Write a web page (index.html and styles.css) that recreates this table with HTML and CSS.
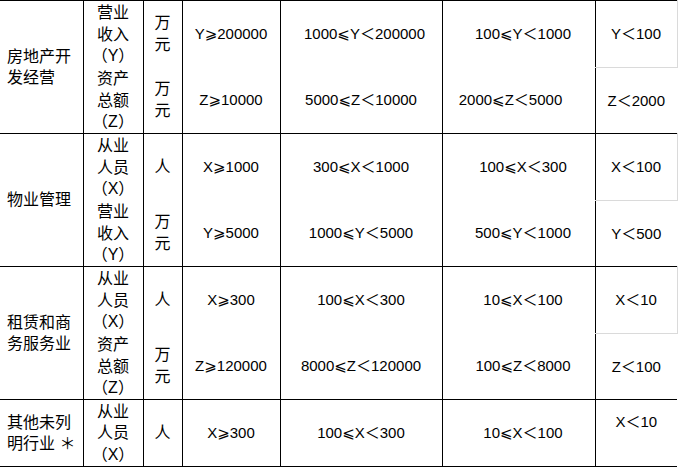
FILE: index.html
```html
<!DOCTYPE html>
<html lang="zh-CN">
<head>
<meta charset="utf-8">
<title>行业划分标准</title>
<link rel="stylesheet" href="styles.css">
</head>
<body>
<table class="grid">
  <colgroup>
    <col class="w-cat">
    <col class="w-ind">
    <col class="w-unit">
    <col class="w-v1">
    <col class="w-v2">
    <col class="w-v3">
    <col class="w-v4">
  </colgroup>
  <tbody>
    <tr class="first h1">
      <td class="cat" rowspan="2">房地产开发经营</td>
      <td class="ind">营业收入（Y）</td>
      <td class="unit">万元</td>
      <td class="v">Y⩾200000</td>
      <td class="v v2 nudge">1000⩽Y＜200000</td>
      <td class="v v3">100⩽Y＜1000</td>
      <td class="v sub">Y＜100</td>
    </tr>
    <tr class="h2">
      <td class="ind">资产总额（Z）</td>
      <td class="unit">万元</td>
      <td class="v">Z⩾10000</td>
      <td class="v v2">5000⩽Z＜10000</td>
      <td class="v v3 back">2000⩽Z＜5000</td>
      <td class="v">Z＜2000</td>
    </tr>
    <tr class="first h1">
      <td class="cat" rowspan="2">物业管理</td>
      <td class="ind">从业人员（X）</td>
      <td class="unit">人</td>
      <td class="v">X⩾1000</td>
      <td class="v v2">300⩽X＜1000</td>
      <td class="v v3">100⩽X＜300</td>
      <td class="v sub">X＜100</td>
    </tr>
    <tr class="h2">
      <td class="ind">营业收入（Y）</td>
      <td class="unit">万元</td>
      <td class="v">Y⩾5000</td>
      <td class="v v2">1000⩽Y＜5000</td>
      <td class="v v3">500⩽Y＜1000</td>
      <td class="v">Y＜500</td>
    </tr>
    <tr class="first h1">
      <td class="cat" rowspan="2">租赁和商务服务业</td>
      <td class="ind">从业人员（X）</td>
      <td class="unit">人</td>
      <td class="v">X⩾300</td>
      <td class="v v2">100⩽X＜300</td>
      <td class="v v3">10⩽X＜100</td>
      <td class="v sub">X＜10</td>
    </tr>
    <tr class="h2">
      <td class="ind">资产总额（Z）</td>
      <td class="unit">万元</td>
      <td class="v">Z⩾120000</td>
      <td class="v v2">8000⩽Z＜120000</td>
      <td class="v v3">100⩽Z＜8000</td>
      <td class="v">Z＜100</td>
    </tr>
    <tr class="first h1 end">
      <td class="cat">其他未列明行业 ＊</td>
      <td class="ind">从业人员（X）</td>
      <td class="unit">人</td>
      <td class="v">X⩾300</td>
      <td class="v v2">100⩽X＜300</td>
      <td class="v v3">10⩽X＜100</td>
      <td class="v raised">X＜10</td>
    </tr>
  </tbody>
</table>
</body>
</html>
```
FILE: styles.css
```css
html, body {
  margin: 0;
  padding: 0;
  background: #ffffff;
}

body {
  font-family: "Liberation Sans", "DejaVu Sans", "Noto Sans CJK SC", sans-serif;
  color: #000000;
}

.grid {
  border-collapse: collapse;
  table-layout: fixed;
  width: 677px;
}

.w-cat { width: 83px; }
.w-ind { width: 60px; }
.w-unit { width: 39px; }
.w-v1 { width: 98px; }
.w-v2 { width: 162px; }
.w-v3 { width: 153px; }
.w-v4 { width: 82px; }

.h1 { height: 67px; }
.h2 { height: 66px; }

.grid td {
  border: 0;
  border-left: 1px solid #000000;
  padding: 0 5px;
  vertical-align: middle;
  text-align: center;
}

.grid .first td {
  border-top: 1px solid #000000;
}

.grid .end td {
  border-bottom: 1px solid #000000;
}

.grid td.cat {
  border-left: 0;
  padding: 0 7px;
  text-align: left;
  font-size: 16px;
  line-height: 21.5px;
}

.grid td.ind {
  padding: 0 7px;
  font-size: 16px;
  line-height: 21.5px;
}

.grid td.unit {
  padding: 0 4px;
  font-size: 16px;
  line-height: 22px;
}

.grid td.v {
  font-size: 15px;
  line-height: 20px;
  white-space: nowrap;
}

.grid td.v2 {
  padding: 0;
}

.grid td.nudge {
  padding-left: 7px;
}

.grid td.v3 {
  padding: 0 0 0 9px;
}

.grid td.back {
  padding: 0 16px 0 0;
}

.grid td.sub {
  border-right: 1px solid #dadada;
  border-bottom: 1px solid #dadada;
}

.grid td.raised {
  vertical-align: top;
  padding-top: 12px;
}
```
